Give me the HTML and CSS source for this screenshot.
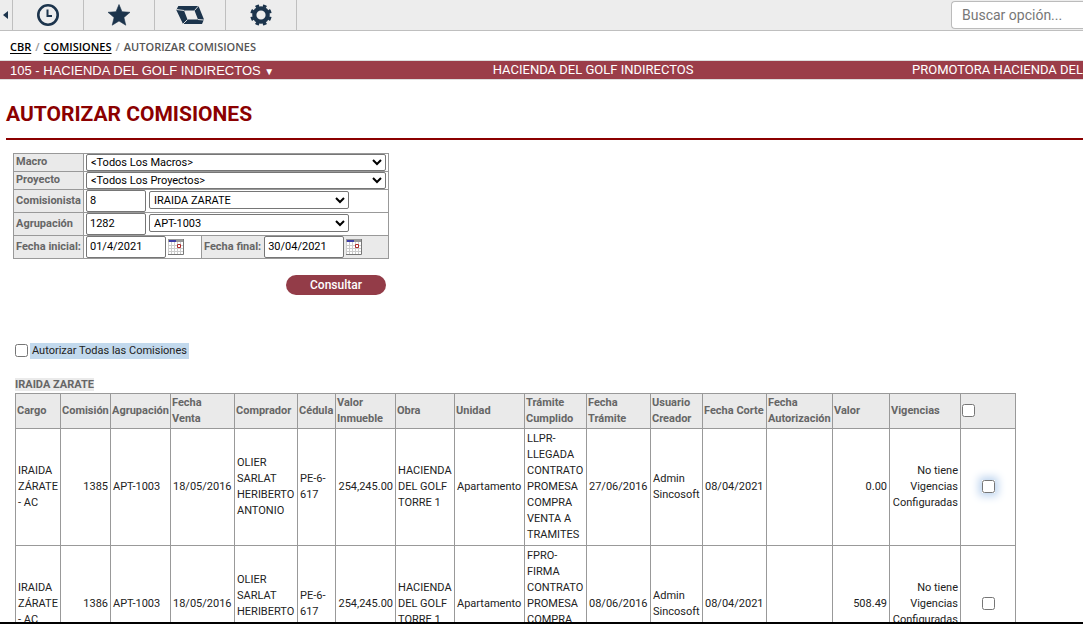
FILE: index.html
```html
<!DOCTYPE html>
<html lang="es">
<head>
<meta charset="utf-8">
<meta name="viewport" content="width=device-width, initial-scale=1">
<title>Autorizar Comisiones</title>
<link rel="stylesheet" href="styles.css">
</head>
<body>
<div class="app">
  <header class="toolbar">
    <button class="tool tool-collapse" type="button" aria-label="Contraer menú"><svg width="5" height="8" viewBox="0 0 5 8"><path d="M5 0v8L0 4z"/></svg></button>
    <button class="tool" type="button" aria-label="Recientes"><svg width="24" height="24" viewBox="0 0 24 24"><circle cx="12" cy="12" r="9.7" fill="none" stroke="currentColor" stroke-width="2.6"/><path d="M10.500 6.500h2V12H16v2h-5.500z"/></svg></button>
    <button class="tool" type="button" aria-label="Favoritos"><svg width="24" height="24" viewBox="0 0 24 24"><path d="M12 1.500l3 7.200 8 .6-6.100 5.200 1.900 7.700-6.800-4.200-6.800 4.200 1.900-7.700L1 9.300l8-.6z" stroke="currentColor" stroke-linejoin="round" stroke-width=".6"/></svg></button>
    <button class="tool" type="button" aria-label="Módulos"><svg width="28" height="20" viewBox="0 0 28 20"><path fill-rule="evenodd" d="M2.300 1h20.200L28 14.500 26 19H7L.3 5zM8 5.500l3.500 9H22l-3.500-9z"/><path d="M8 5.500L.5 4.500M18.500 5.500l4-4.500M22 14.500l6 .5M11.500 14.500L7 19" stroke="#ededed" stroke-width=".9"/></svg></button>
    <button class="tool" type="button" aria-label="Configuración"><svg width="24" height="24" viewBox="0 0 24 24" fill="none" stroke="currentColor"><circle cx="12" cy="12" r="6.7" stroke-width="4.200"/><circle cx="12" cy="12" r="9.5" stroke-width="2.600" pathLength="16" stroke-dasharray="1 1" transform="rotate(11.250 12 12)"/></svg></button>
    <input class="search" type="text" placeholder="Buscar opción..." aria-label="Buscar opción">
  </header>
  <nav class="crumbs" aria-label="Ruta">
    <a href="#">CBR</a><span class="slash">/</span><a href="#">COMISIONES</a><span class="slash">/</span><span>AUTORIZAR COMISIONES</span>
  </nav>
  <div class="company">
    <button class="company-picker" type="button">105 - HACIENDA DEL GOLF INDIRECTOS <span class="caret">▼</span></button>
    <span>HACIENDA DEL GOLF INDIRECTOS</span>
    <span>PROMOTORA HACIENDA DEL</span>
  </div>
  <main class="content">
    <h1>AUTORIZAR COMISIONES</h1>
    <form class="query">
      <div class="filters">
        <div class="row row-short"><label class="name" for="macro">Macro</label><div class="field"><select id="macro" class="wide"><option>&lt;Todos Los Macros&gt;</option></select></div></div>
        <div class="row row-short"><label class="name" for="proyecto">Proyecto</label><div class="field"><select id="proyecto" class="wide"><option>&lt;Todos Los Proyectos&gt;</option></select></div></div>
        <div class="row"><label class="name" for="comisionista">Comisionista</label><div class="field"><input id="comisionista" class="code" value="8"><select class="pair" aria-label="Nombre del comisionista"><option>IRAIDA ZARATE</option></select></div></div>
        <div class="row"><label class="name" for="agrupacion">Agrupación</label><div class="field"><input id="agrupacion" class="code" value="1282"><select class="pair" aria-label="Nombre de la agrupación"><option>APT-1003</option></select></div></div>
        <div class="row row-dates"><label class="name" for="inicial">Fecha inicial:</label><div class="field field-date"><input id="inicial" class="date" value="01/4/2021"><button class="cal" type="button" aria-label="Elegir fecha inicial"><svg width="16" height="16" viewBox="0 0 16 16"><use href="#cal"/></svg></button></div>
          <div class="field field-date field-end"><label for="final">Fecha final:</label><input id="final" class="date" value="30/04/2021"><button class="cal" type="button" aria-label="Elegir fecha final"><svg width="16" height="16" viewBox="0 0 16 16"><use href="#cal"/></svg></button></div></div>
      </div>
      <button class="submit" type="button">Consultar</button>
    </form>
    <div class="all"><input type="checkbox" id="todas"><label for="todas">Autorizar Todas las Comisiones</label></div>
    <table class="grid">
      <caption><span>IRAIDA ZARATE</span></caption>
      <colgroup><col class="w45"><col class="w50"><col class="w60"><col class="w64"><col class="w63"><col class="w38"><col class="w60"><col class="w59"><col class="w70"><col class="w62"><col class="w64"><col class="w52"><col class="w64"><col class="w66"><col class="w57"><col class="w71"><col class="w55"></colgroup>
      <thead><tr><th>Cargo</th><th>Comisión</th><th>Agrupación</th><th>Fecha<br>Venta</th><th>Comprador</th><th>Cédula</th><th>Valor Inmueble</th><th>Obra</th><th>Unidad</th><th>Trámite Cumplido</th><th>Fecha<br>Trámite</th><th>Usuario Creador</th><th>Fecha Corte</th><th>Fecha Autorización</th><th>Valor</th><th>Vigencias</th><th><input type="checkbox" aria-label="Seleccionar todas"></th></tr></thead>
      <tbody>
        <tr><td>IRAIDA ZÁRATE - AC</td><td class="num">1385</td><td>APT-1003</td><td>18/05/2016</td><td>OLIER SARLAT HERIBERTO ANTONIO</td><td>PE-6-617</td><td class="num">254,245.00</td><td>HACIENDA DEL GOLF TORRE 1</td><td>Apartamento</td><td>LLPR-LLEGADA CONTRATO PROMESA COMPRA VENTA A TRAMITES</td><td>27/06/2016</td><td>Admin Sincosoft</td><td>08/04/2021</td><td></td><td class="num">0.00</td><td class="num">No tiene Vigencias Configuradas</td><td class="pick"><input class="active" type="checkbox" aria-label="Autorizar comisión 1385"></td></tr>
        <tr><td>IRAIDA ZÁRATE - AC</td><td class="num">1386</td><td>APT-1003</td><td>18/05/2016</td><td>OLIER SARLAT HERIBERTO ANTONIO</td><td>PE-6-617</td><td class="num">254,245.00</td><td>HACIENDA DEL GOLF TORRE 1</td><td>Apartamento</td><td>FPRO-FIRMA CONTRATO PROMESA COMPRA VENTA A TRAMITES</td><td>08/06/2016</td><td>Admin Sincosoft</td><td>08/04/2021</td><td></td><td class="num">508.49</td><td class="num">No tiene Vigencias Configuradas</td><td class="pick"><input type="checkbox" aria-label="Autorizar comisión 1386"></td></tr>
      </tbody>
    </table>
  </main>
</div>
<svg class="defs" width="0" height="0" aria-hidden="true"><defs><g id="cal"><path fill="#fff" d="M0 0h16v16H0z"/><path stroke="#ccc" d="M0 6.500h15M0 9.500h15M0 12.500h15M3.500 3v12M6.500 3v12M9.500 3v12M12.500 3v12M.5 3v12"/><path fill="#999" d="M0 0h16v3H0z"/><path fill="#3f3fa8" d="M1 1h7v2H1z"/><path fill="none" stroke="#777" d="M15.500 0v15.500H0"/><path fill="#fff" stroke="#b02a2a" d="M9.500 5.500h3v3h-3z"/></g></defs></svg>
</body>
</html>
```
FILE: styles.css
```css
* { box-sizing: border-box; }
body { margin: 0; background: #fff; color: #222; font: 11px/16px Roboto, sans-serif; }
button, input, select { font: inherit; color: inherit; margin: 0; }
button { border: 0; padding: 0; background: none; }
.defs { position: absolute; }
.app { display: flex; flex-direction: column; height: 100vh; overflow: hidden; border-bottom: 2px solid #000; }

.toolbar { display: flex; flex: none; height: 31px; background: #ededed; border-bottom: 1px solid #bfbfbf; }
.tool { display: flex; align-items: center; justify-content: center; width: 71px; border-right: 1px solid #bfbfbf; color: #1c344c; fill: currentColor; }
.tool-collapse { width: 13px; padding-right: 2px; }
.search { width: 132px; height: 28px; margin: 1px 0 0 auto; padding: 0 0 0 10px; border: 1px solid #bbb; border-right: 0; border-radius: 4px 0 0 4px; background: #fff; font-size: 14px; outline: 0; }
.search::placeholder { color: #777; }

.crumbs { display: flex; flex: none; align-items: center; height: 29px; padding: 2px 10px 0; color: #555; font: 600 11px/16px "Open Sans", sans-serif; }
.crumbs a { color: #000; text-underline-offset: 2px; }
.slash { padding: 0 4px; color: #999; }

.company { display: flex; flex: none; align-items: center; justify-content: space-between; height: 20px; padding-left: 10px; border: solid #ddd; border-width: 1px 0; background: #9b3d49; color: #fff; font-size: 13px; white-space: nowrap; }
.company-picker { padding-top: 1px; font: 13px/17px "Liberation Sans", sans-serif; }
.caret { font-size: 10px; }

.content { flex: 1; min-height: 0; overflow: hidden; padding-left: 6px; }
h1 { margin: 0 0 13px; padding: 20px 0 10px; border-bottom: 2px solid #8b0000; color: #8b0000; font-size: 21px; font-weight: 700; line-height: 28px; }
.query { display: flex; flex-direction: column; align-items: flex-end; width: max-content; margin-left: 7px; }
.filters { border: 1px solid #999; }
.row { display: grid; grid-template-columns: 70px 304px; height: 23px; }
.row + .row { border-top: 1px solid #999; }
.row-short { height: 18px; }
.row-short:first-child { height: 17px; }
.row-dates { grid-template-columns: 70px 117px 187px; }
.name { display: flex; align-items: center; padding: 0 0 1px 2px; border-right: 1px solid #999; background: #eaeaea; }
.filters label { color: #666; font-weight: 700; white-space: nowrap; }
.field { display: flex; align-items: center; gap: 3px; padding-left: 2px; }
.field-date { gap: 2px; }
.field-end { border-left: 1px solid #999; background: #eaeaea; }
.field-end label { padding-right: 1px; }
.field select { width: 200px; height: 17px; padding: 0; border: 1px solid #767676; border-radius: 2px; background-color: #fff; color: #000; }
.field .wide { width: 300px; }
.field .pair { height: 18px; margin-bottom: 2px; }
.code, .date { width: 60px; height: 22px; padding: 0 3px 2px; border: 1px solid #767676; border-radius: 2px; background: #fff; color: #000; }
.date { width: 80px; }
.cal { display: flex; }
.submit { width: 100px; height: 20px; margin: 16px 3px 0 0; border-radius: 10px; background: #933c48; color: #fff; font-size: 12px; font-weight: 500; }

input[type="checkbox"] { width: 13px; height: 13px; }
.all { display: flex; align-items: center; gap: 2px; margin: 48px 0 0 9px; }
.all input { margin-bottom: 2px; }
.all label { padding: 0 2px; background: #c2d9ed; }

.grid { width: 1001px; margin: 17px 0 0 9px; border-collapse: collapse; table-layout: fixed; }
caption { height: 17px; padding-top: 1px; text-align: left; color: #666; font-weight: 700; }
caption span { background: #eaeaea; }
th, td { border: 1px solid #999; text-align: left; }
th { height: 35px; padding: 1px; background: #eaeaea; color: #666; font-weight: 700; }
td { height: 117px; padding: 1px 2px; }
.num { text-align: right; }
.pick { text-align: center; }
th input, td input { display: inline-block; margin-bottom: 2px; vertical-align: middle; }
.active { border-radius: 3px; box-shadow: 0 0 8px 3px #bcd3ee; }
.w38 { width: 38px; }
.w45 { width: 45px; }
.w50 { width: 50px; }
.w52 { width: 52px; }
.w55 { width: 55px; }
.w57 { width: 57px; }
.w59 { width: 59px; }
.w60 { width: 60px; }
.w62 { width: 62px; }
.w63 { width: 63px; }
.w64 { width: 64px; }
.w66 { width: 66px; }
.w70 { width: 70px; }
.w71 { width: 71px; }
```
